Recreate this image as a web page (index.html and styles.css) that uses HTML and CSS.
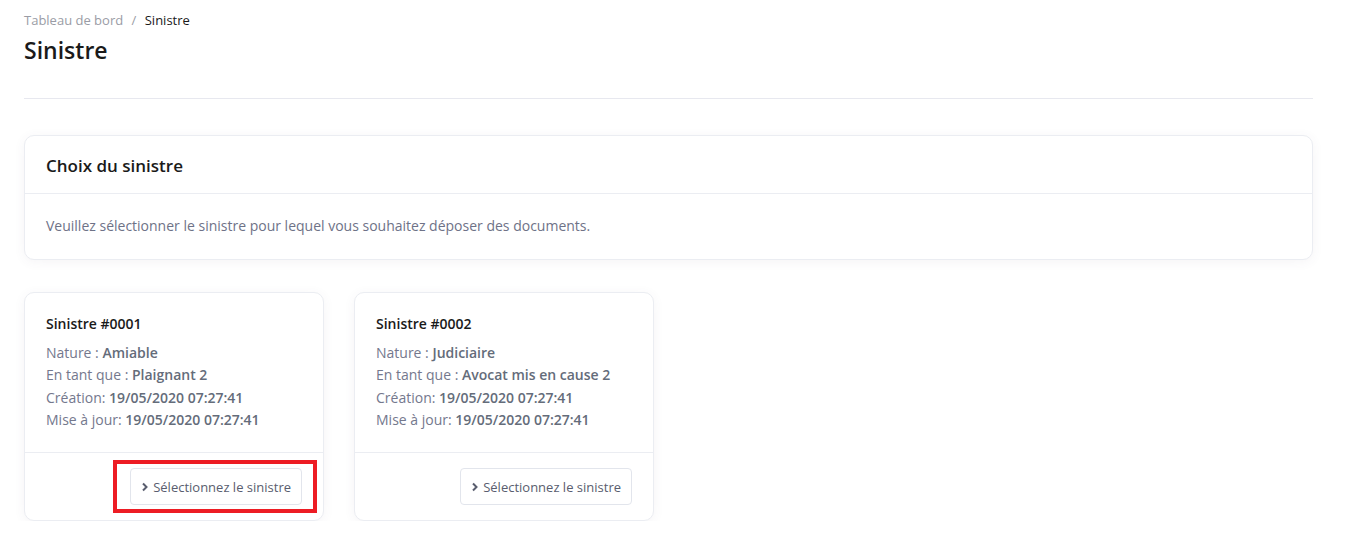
FILE: index.html
```html
<!DOCTYPE html>
<html lang="fr">
<head>
    <meta charset="UTF-8">
    <title>Sinistre</title>
    <link rel="stylesheet" href="styles.css">
</head>
<body>
    <div class="page">
        <div class="subheader">
            <div class="breadcrumb">
                <a href="#">Tableau de bord</a>
                <span class="sep">/</span>
                <span class="current">Sinistre</span>
            </div>
            <h1 class="page-title">Sinistre</h1>
        </div>

        <div class="panel">
            <div class="panel-head">
                <h3>Choix du sinistre</h3>
            </div>
            <div class="panel-body">
                Veuillez sélectionner le sinistre pour lequel vous souhaitez déposer des documents.
            </div>
        </div>

        <div class="claims">
            <div class="claim">
                <div class="claim-body">
                    <h4>Sinistre #0001</h4>
                    <p>Nature : <b>Amiable</b></p>
                    <p>En tant que : <b>Plaignant 2</b></p>
                    <p>Création: <b>19/05/2020 07:27:41</b></p>
                    <p>Mise à jour: <b>19/05/2020 07:27:41</b></p>
                </div>
                <div class="claim-foot">
                    <a href="#" class="btn highlighted">
                        <svg width="8" height="10" viewBox="0 0 8 10"><path d="M2 1.5 L5.5 5 L2 8.5" fill="none" stroke="currentColor" stroke-width="2"/></svg>
                        Sélectionnez le sinistre
                    </a>
                </div>
            </div>
            <div class="claim">
                <div class="claim-body">
                    <h4>Sinistre #0002</h4>
                    <p>Nature : <b>Judiciaire</b></p>
                    <p>En tant que : <b>Avocat mis en cause 2</b></p>
                    <p>Création: <b>19/05/2020 07:27:41</b></p>
                    <p>Mise à jour: <b>19/05/2020 07:27:41</b></p>
                </div>
                <div class="claim-foot">
                    <a href="#" class="btn">
                        <svg width="8" height="10" viewBox="0 0 8 10"><path d="M2 1.5 L5.5 5 L2 8.5" fill="none" stroke="currentColor" stroke-width="2"/></svg>
                        Sélectionnez le sinistre
                    </a>
                </div>
            </div>
        </div>
    </div>
</body>
</html>
```

FILE: styles.css
```css
body {
    margin: 0;
    background: #fff;
    font-family: "Open Sans", sans-serif;
    color: #6c7293;
}

.page {
    padding: 0 57px 0 24px;
}

.subheader {
    padding-top: 10px;
    padding-bottom: 33px;
    border-bottom: 1px solid #e7e8ef;
}

.breadcrumb {
    font-size: 13px;
    line-height: 20px;
    color: #9a9ca5;
}

.breadcrumb a {
    color: #9a9ca5;
    text-decoration: none;
}

.breadcrumb .sep {
    margin: 0 5px;
}

.breadcrumb .current {
    color: #1a1a1a;
}

.page-title {
    margin: 5px 0 0 0;
    font-size: 23px;
    line-height: 30px;
    font-weight: 600;
    color: #1a1a1a;
}

.panel {
    margin-top: 36px;
    background: #fff;
    border: 1px solid #ebedf2;
    border-radius: 10px;
    box-shadow: 0 2px 12px rgba(82, 63, 105, 0.06);
}

.panel-head {
    height: 58px;
    display: flex;
    align-items: center;
    padding: 1px 21px 0;
    box-sizing: border-box;
    border-bottom: 1px solid #ebedf2;
}

.panel-head h3 {
    margin: 0;
    font-size: 17px;
    font-weight: 600;
    color: #1a1a1a;
}

.panel-body {
    padding: 22px 21px 23px;
    font-size: 14px;
    line-height: 20px;
    color: #6e7287;
}

.claims {
    display: flex;
    gap: 30px;
    margin-top: 32px;
}

.claim {
    width: 298px;
    background: #fff;
    border: 1px solid #ebedf2;
    border-radius: 10px;
    box-shadow: 0 2px 12px rgba(82, 63, 105, 0.06);
}

.claim-body {
    padding: 21px 21px 21px;
    border-bottom: 1px solid #ebedf2;
    height: 117px;
}

.claim-body h4 {
    margin: 0 0 8px 0;
    font-size: 14px;
    line-height: 20px;
    font-weight: 600;
    color: #1a1a1a;
}

.claim-body p {
    margin: 0;
    font-size: 14px;
    line-height: 22.3px;
    color: #74788d;
}

.claim-body b {
    font-weight: 600;
    color: #646c7a;
}

.claim-foot {
    display: flex;
    justify-content: flex-end;
    padding: 15px 21px 15px;
}

.btn {
    position: relative;
    display: flex;
    align-items: center;
    gap: 4px;
    height: 35px;
    padding: 0 10px;
    border: 1px solid #e2e5ec;
    border-radius: 4px;
    font-size: 13px;
    color: #595d6e;
    text-decoration: none;
}

.btn svg {
    color: #595d6e;
}

.highlighted::after {
    content: "";
    position: absolute;
    top: -9px;
    bottom: -9px;
    left: -18px;
    right: -16px;
    border: 4px solid #ed1c24;
}
```
